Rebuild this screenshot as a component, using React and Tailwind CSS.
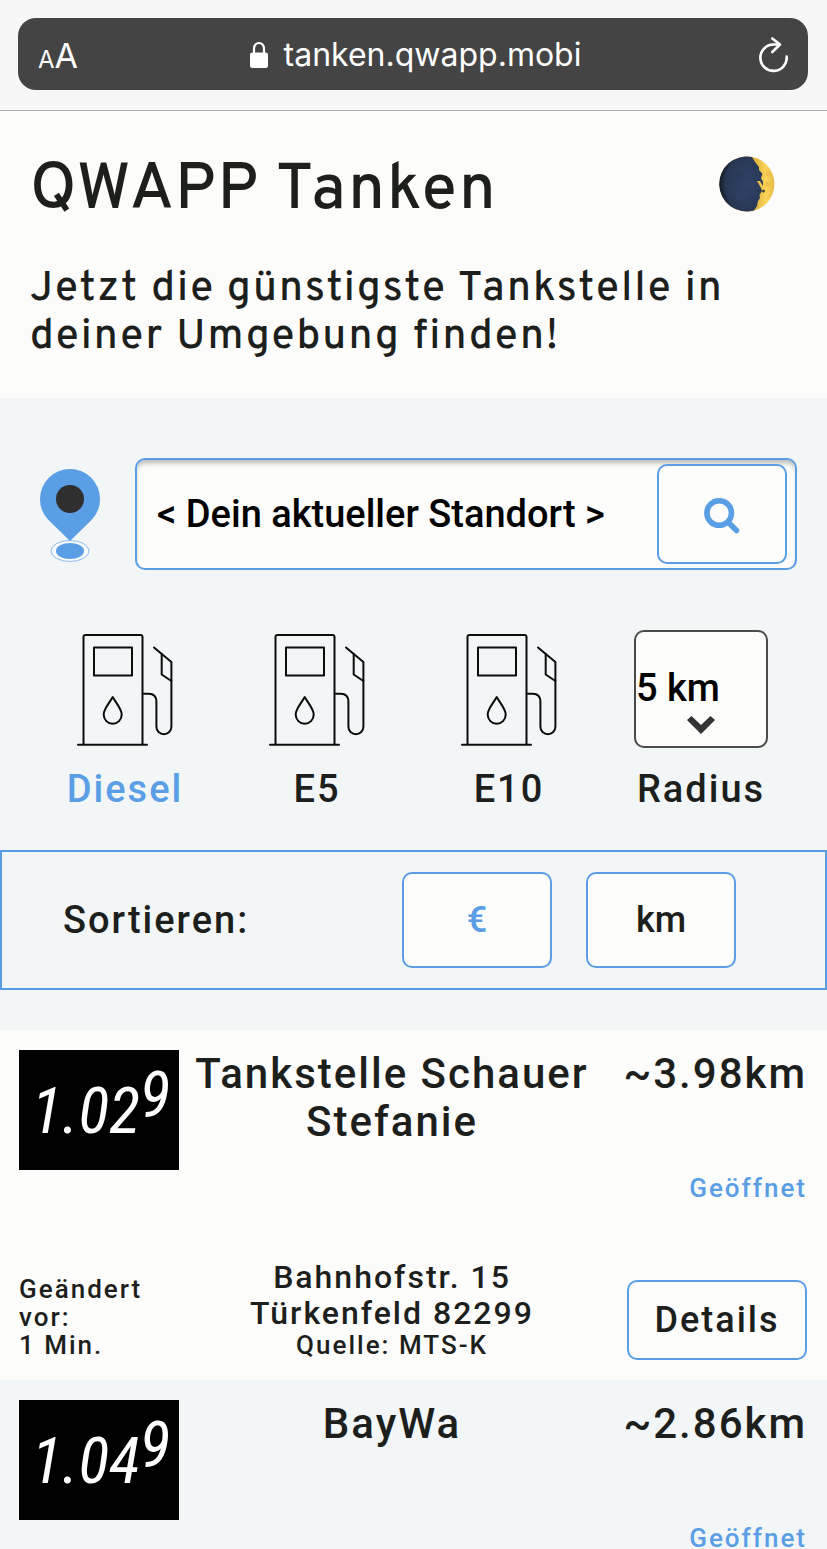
import React, { useState } from 'react';

const fuels = ['Diesel', 'E5', 'E10'];

const stations = [
  {
    name: 'Tankstelle Schauer Stefanie',
    price: '1.02',
    tenth: '9',
    distance: '~3.98km',
    status: 'Geöffnet',
    changed: '1 Min.',
    street: 'Bahnhofstr. 15',
    city: 'Türkenfeld 82299',
    source: 'MTS-K',
  },
  {
    name: 'BayWa',
    price: '1.04',
    tenth: '9',
    distance: '~2.86km',
    status: 'Geöffnet',
  },
];

const LockIcon = () => (
  <svg viewBox="0 0 20 28" className="w-5 h-7" aria-hidden="true">
    <path d="M5 13V7.500a5 5.500 0 0 1 10 0V13" fill="none" stroke="#fff" strokeWidth="2.2" />
    <rect x="1" y="11.500" width="18" height="15.500" rx="2.500" fill="#fff" />
  </svg>
);

const ReloadIcon = () => (
  <svg viewBox="0 0 32 38" className="w-8 h-[38px]" fill="none" stroke="#fff" strokeWidth="2.6" strokeLinecap="round" strokeLinejoin="round">
    <path d="M23 7.500H17.500A13.200 13.200 0 1 0 30.700 19.500" />
    <path d="M16.300 1.500L24 7.500L16.300 15" />
  </svg>
);

const MoonIcon = () => (
  <svg viewBox="0 0 56 56" className="w-14 h-14">
    <defs>
      <radialGradient id="dark" cx="0.65" cy="0.5" r="0.68">
        <stop offset="0" stopColor="#2f4265" />
        <stop offset="0.75" stopColor="#283754" />
        <stop offset="1" stopColor="#0d1118" />
      </radialGradient>
      <linearGradient id="lit" x1="0" x2="1" y1="0" y2="0">
        <stop offset="0.6" stopColor="#d9ab3a" />
        <stop offset="0.85" stopColor="#fbd557" />
        <stop offset="1" stopColor="#e6b84c" />
      </linearGradient>
    </defs>
    <circle cx="28" cy="28" r="27.500" fill="url(#lit)" />
    <path d="M33 1A27.500 27.500 0 1 0 35 54.500L38 50L39 45L41 42L40.500 39L43 35L42 32L38 25L41 25L44 30L44 26L42 22L43.500 18L40 14L40 11L36 6Z" fill="url(#dark)" />
    <circle cx="49" cy="18" r="2.500" fill="#edbd4a" opacity="0.7" />
    <circle cx="49" cy="28" r="3" fill="#edbd4a" opacity="0.7" />
    <circle cx="44.500" cy="35" r="1.500" fill="#4c4640" />
    <circle cx="20" cy="20" r="5" fill="#263654" opacity="0.4" />
    <circle cx="22" cy="39" r="6" fill="#34486d" opacity="0.3" />
  </svg>
);

const PinIcon = () => (
  <svg viewBox="0 -3 60 96" className="w-[60px] h-24 shrink-0" aria-hidden="true">
    <ellipse cx="30" cy="82" rx="19" ry="10.500" fill="#f7fbfd" stroke="#8fbbea" strokeWidth="1" />
    <path d="M30 72L8 50.500A30 30 0 0 1 0 30A30 30 0 0 1 60 30A30 30 0 0 1 52 50.500Z" fill="#5a9ee5" />
    <circle cx="30" cy="30" r="14" fill="#2f2f2f" />
    <ellipse cx="30" cy="82" rx="14" ry="8" fill="#5a9ee5" />
  </svg>
);

const SearchIcon = () => (
  <svg viewBox="0 0 36 40" className="w-9 h-10" fill="none" stroke="#5a9ee5">
    <circle cx="15.200" cy="19" r="12.300" strokeWidth="5.600" />
    <path d="M24 28L32.500 36.500" strokeWidth="5.500" strokeLinecap="round" />
  </svg>
);

const PumpIcon = () => (
  <svg viewBox="0 0 96 114" className="w-24 h-[114px]" fill="none" stroke="#0b0c0c" strokeWidth="2" strokeLinecap="round" strokeLinejoin="round">
    <path d="M6.500 112V5a2 2 0 0 1 2-2h55a2 2 0 0 1 2 2v107" />
    <path d="M1 112.700h69" />
    <rect x="17" y="15.500" width="38" height="28" />
    <path d="M35.700 65C32 71.500 26.700 77 26.700 82.500a9 9.300 0 0 0 18 0C44.700 77 39.400 71.500 35.700 65Z" />
    <path d="M65.700 61.700h6c5 0 7.700 3 7.700 8v25a7.500 7.500 0 0 0 15 0V30L77 15.500" />
    <path d="M84.700 22v20.500L94.400 49" />
  </svg>
);

const PriceDisplay = ({ price, tenth }) => (
  <div className="flex h-[120px] w-40 justify-center bg-black pt-2.5 pl-1 font-['Roboto_Condensed','Roboto',sans-serif] text-[64px] leading-[72px] font-normal tracking-normal text-white italic">
    <span className="pt-4">{price}</span>
    <span>{tenth}</span>
  </div>
);

const Station = ({ station }) => (
  <li className="bg-[#fcfcfa] py-5 pr-5 pl-[19px] even:bg-[#f2f6f7]">
    <div className="grid grid-cols-[160px_1fr_202px]">
      <PriceDisplay price={station.price} tenth={station.tenth} />
      <h2 className="text-center text-[42px] leading-12">{station.name}</h2>
      <div className="text-right">
        <p className="text-[42px] leading-12">{station.distance}</p>
        <p className="mt-[72px] text-[26px] leading-9 text-[#5a9ee5]">{station.status}</p>
      </div>
    </div>
    {station.street && (
      <div className="mt-[53px] grid grid-cols-[160px_1fr_202px] items-end">
        <p className="pb-px text-[26px] leading-7">
          Geändert
          <br />
          vor:
          <br />
          {station.changed}
        </p>
        <div className="pb-px text-center text-[32px] leading-9">
          <p>{station.street}</p>
          <p>{station.city}</p>
          <p className="text-[26px] leading-7">Quelle: {station.source}</p>
        </div>
        <button type="button" className="h-20 w-[180px] justify-self-end rounded-[10px] border-2 border-[#5a9ee5] bg-[#fcfcfa] text-4xl tracking-[2px]">
          Details
        </button>
      </div>
    )}
  </li>
);

const App = () => {
  const [fuel, setFuel] = useState('Diesel');
  const [sort, setSort] = useState('price');
  const [location, setLocation] = useState('< Dein aktueller Standort >');
  const [radius, setRadius] = useState('5');

  return (
    <div className="flex h-screen flex-col overflow-hidden bg-[#f2f6f7] font-['Roboto',sans-serif] font-medium text-[#1d1f1d]">
      <div className="border-b border-[#b0b0b2] bg-[#f7f7f7] pt-[18px] pr-[19px] pb-5 pl-[18px]">
        <div className="flex h-[72px] items-center justify-between rounded-[18px] bg-[#444444] pt-1 pr-5 pl-5 font-['Inter',sans-serif] font-normal text-white">
          <button type="button" className="text-[34px] leading-10">
            <span className="text-2xl">A</span>A
          </button>
          <div className="flex items-center gap-[15px] pr-1 pb-0.5 text-[32px] leading-10">
            <LockIcon />
            <span>tanken.qwapp.mobi</span>
          </div>
          <button type="button" aria-label="Neu laden">
            <ReloadIcon />
          </button>
        </div>
      </div>

      <header className="bg-[#fcfcfa] px-[30px] pt-[45px] pb-9 font-['Overpass','Roboto',sans-serif] tracking-[2px]">
        <div className="flex items-start justify-between pr-[22px]">
          <h1 className="text-[64px] leading-[72px]">QWAPP Tanken</h1>
          <button type="button" aria-label="Dunkles Design">
            <MoonIcon />
          </button>
        </div>
        <p className="mt-[38px] text-[42px] leading-12">Jetzt die günstigste Tankstelle in deiner Umgebung finden!</p>
      </header>

      <main className="tracking-[2px]">
        <div className="flex items-center gap-[35px] pt-[60px] pr-[30px] pl-10">
          <PinIcon />
          <form
            onSubmit={(e) => e.preventDefault()}
            className="flex min-w-0 flex-1 items-center rounded-[10px] border-2 border-[#5a9ee5] bg-[#fcfcfa] py-1 pr-2 pl-5 shadow-[inset_0_5px_5px_-2px_#b8b8b8]"
          >
            <input
              type="text"
              aria-label="Standort"
              className="min-w-0 flex-1 bg-transparent text-[38px] tracking-normal text-black outline-none"
              value={location}
              onChange={(e) => setLocation(e.target.value)}
            />
            <button type="submit" aria-label="Suchen" className="flex h-[100px] w-[130px] items-center justify-center rounded-[10px] border-2 border-[#5a9ee5] bg-[#fcfcfa]">
              <SearchIcon />
            </button>
          </form>
        </div>

        <div className="mt-[60px] grid grid-cols-4 pr-[30px] pl-[29px] text-[38px] leading-12">
          {fuels.map((name) => (
            <button
              key={name}
              type="button"
              aria-pressed={fuel === name}
              onClick={() => setFuel(name)}
              className={`flex flex-col items-center gap-[17px] tracking-[2px] ${fuel === name ? 'text-[#5a9ee5]' : ''}`}
            >
              <span className="flex h-[118px] items-center">
                <PumpIcon />
              </span>
              <span>{name}</span>
            </button>
          ))}
          <div className="flex flex-col items-center gap-[17px]">
            <div className="relative">
              <select
                id="radius"
                value={radius}
                onChange={(e) => setRadius(e.target.value)}
                className="h-[118px] w-[134px] appearance-none rounded-[10px] border-2 border-[#4a4a4a] bg-[#fcfcfa] pb-0.5 tracking-normal text-black"
              >
                <option value="5">5 km</option>
                <option value="10">10 km</option>
                <option value="25">25 km</option>
              </select>
              <svg viewBox="0 0 28 18" className="pointer-events-none absolute bottom-3.5 left-[53px] h-[18px] w-7" aria-hidden="true">
                <path d="M0 4L4.500 0L14 9L23.500 0L28 4L14 18Z" fill="#333" />
              </svg>
            </div>
            <label htmlFor="radius">Radius</label>
          </div>
        </div>

        <div className="mt-[37px] mb-10 flex items-center gap-[34px] border-2 border-[#5a9ee5] py-5 pr-[89px] pl-[61px] text-[38px]">
          <span className="flex-1">Sortieren:</span>
          <button
            type="button"
            aria-pressed={sort === 'price'}
            onClick={() => setSort('price')}
            className={`h-24 w-[150px] rounded-[10px] border-2 border-[#5a9ee5] bg-[#fcfcfa] text-4xl tracking-normal ${sort === 'price' ? 'text-[#5a9ee5]' : ''}`}
          >
            €
          </button>
          <button
            type="button"
            aria-pressed={sort === 'distance'}
            onClick={() => setSort('distance')}
            className={`h-24 w-[150px] rounded-[10px] border-2 border-[#5a9ee5] bg-[#fcfcfa] text-4xl tracking-normal ${sort === 'distance' ? 'text-[#5a9ee5]' : ''}`}
          >
            km
          </button>
        </div>

        <ul>
          {stations.map((station) => (
            <Station key={station.name} station={station} />
          ))}
        </ul>
      </main>
    </div>
  );
};

export default App;
